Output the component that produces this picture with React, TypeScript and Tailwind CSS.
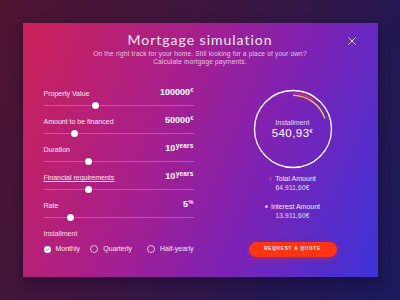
import React from 'react';

type Row = {
  label: string;
  value: string;
  unit: string;
  pos: number; // thumb centre, px from track start
  underline?: boolean;
};

const rows: Row[] = [
  { label: 'Property Value', value: '100000', unit: '€', pos: 52 },
  { label: 'Amount to be financed', value: '50000', unit: '€', pos: 31 },
  { label: 'Duration', value: '10', unit: 'years', pos: 45 },
  { label: 'Financial requirements', value: '10', unit: 'years', pos: 45, underline: true },
  { label: 'Rate', value: '5', unit: '%', pos: 27 },
];

const SliderRow: React.FC<{ row: Row }> = ({ row }) => (
  <div className="flex flex-col">
    <div className="flex items-end justify-between h-[10px]">
      <span
        className={`text-[7px] leading-[10px] text-white/90 ${row.underline ? 'underline underline-offset-1' : ''}`}
      >
        {row.label}
      </span>
      <span className="text-[9px] leading-[10px] font-bold text-white whitespace-nowrap relative -top-[1px]">
        {row.value}
        <span
          className={`font-bold relative ml-[0.5px] ${row.unit === 'years' ? 'text-[6.5px] -top-[3px] tracking-[0.02em]' : 'text-[5.5px] -top-[3px]'}`}
        >
          {row.unit}
        </span>
      </span>
    </div>
    <div className="relative h-[12px] flex items-center">
      <div className="h-px w-full bg-white/25" />
      <div
        className="absolute top-1/2 w-[7px] h-[7px] -mt-[3.5px] -ml-[3.5px] rounded-full bg-white shadow-[0_0_2px_rgba(0,0,0,0.25)]"
        style={{ left: row.pos }}
      />
    </div>
  </div>
);

const Radio: React.FC<{ label: string; checked?: boolean; width: string }> = ({ label, checked, width }) => (
  <div className={`flex items-center gap-[5px] whitespace-nowrap ${width}`}>
    {checked ? (
      <span className="w-[7px] h-[7px] rounded-full bg-white flex items-center justify-center">
        <svg width="5" height="5" viewBox="0 0 10 10">
          <path d="M2 5.2 L4.2 7.3 L8 2.8" fill="none" stroke="#3fb950" strokeWidth="1.6" strokeLinecap="round" strokeLinejoin="round" />
        </svg>
      </span>
    ) : (
      <span className="w-[8px] h-[8px] rounded-full border border-white/70" />
    )}
    <span className="text-[7px] leading-[10px] font-medium text-white/90">{label}</span>
  </div>
);

const Gauge: React.FC = () => {
  const c = 40;
  const arc = (r: number, deg: number) => {
    const a = (deg * Math.PI) / 180;
    const x = c + r * Math.sin(a);
    const y = c - r * Math.cos(a);
    return `M ${c} ${c - r} A ${r} ${r} 0 0 1 ${x.toFixed(2)} ${y.toFixed(2)}`;
  };
  return (
    <div className="relative w-[80px] h-[80px]">
      <svg width="80" height="80" viewBox="0 0 80 80" className="absolute inset-0">
        <circle cx={c} cy={c} r="38.5" fill="none" stroke="#ffffff" strokeWidth="1.3" />
        <path d={arc(35.6, 34)} fill="none" stroke="#e8344a" strokeWidth="1.4" />
        <path d={arc(33.6, 72)} fill="none" stroke="#f6c25a" strokeWidth="1.4" />
      </svg>
      <div className="absolute inset-0 flex flex-col items-center justify-center pt-[2px]">
        <span className="text-[7px] leading-[9px] text-white/80">Installment</span>
        <span className="text-[11.5px] leading-[13px] font-medium tracking-[0.04em] text-white whitespace-nowrap">
          540,93<span className="text-[6px] relative -top-[4px]">€</span>
        </span>
      </div>
    </div>
  );
};

export default function App() {
  return (
    <div
      className="w-[400px] h-[300px] flex items-center justify-center bg-[linear-gradient(115deg,#4e1430_0%,#3a1540_45%,#241750_75%,#1b1a5c_100%)]"
      style={{ fontFamily: '"Liberation Sans", Arial, sans-serif' }}
    >
      <div className="relative w-[355px] h-[254px] bg-[linear-gradient(112deg,#cc2157_0%,#a81f8c_38%,#7e22b4_65%,#3c33d8_100%)] shadow-[0_4px_10px_rgba(10,5,40,0.45)] flex flex-col">
        {/* Close */}
        <button className="absolute right-[22px] top-[14px] w-[8px] h-[8px]">
          <svg width="8" height="8" viewBox="0 0 8 8">
            <path d="M0.5 0.5 L7.5 7.5 M7.5 0.5 L0.5 7.5" stroke="#f3dcf5" strokeWidth="1" />
          </svg>
        </button>

        {/* Header */}
        <div className="pt-[9px] flex flex-col items-center">
          <h1
            className="text-[14px] leading-[16px] font-normal tracking-[0.07em] text-white/90"
            style={{ fontFamily: 'Lato, "Liberation Sans", sans-serif' }}
          >
            Mortgage simulation
          </h1>
          <p className="mt-[2px] text-[6.5px] leading-[8px] tracking-[0.03em] text-white/75 text-center">
            On the right track for your home. Still looking for a place of your own?
            <br />
            Calculate mortgage payments.
          </p>
        </div>

        {/* Body */}
        <div className="flex pl-[21px] pr-[15px] mt-[23px]">
          {/* Left: sliders */}
          <div className="w-[150px] flex flex-col gap-[6px]">
            {rows.map((r) => (
              <SliderRow key={r.label} row={r} />
            ))}
            <div className="flex flex-col">
              <span className="text-[7px] leading-[10px] text-white/85">Installment</span>
              <div className="flex items-center mt-[5px] h-[10px]">
                <Radio label="Monthly" checked width="w-[47px]" />
                <Radio label="Quarterly" width="w-[57px]" />
                <Radio label="Half-yearly" width="w-auto" />
              </div>
            </div>
          </div>

          {/* Right: result */}
          <div className="ml-[29px] flex-1 flex flex-col items-center">
            <Gauge />
            <div className="mt-[5px] flex flex-col items-center">
              <span className="flex items-center gap-[3px] text-[7px] leading-[9px] font-medium text-white/90">
                <span className="w-[3px] h-[3px] rounded-full bg-[#e8344a]" />
                Total Amount
              </span>
              <span className="text-[6.5px] leading-[9px] text-white/85 tracking-[0.03em]">64.911,60€</span>
            </div>
            <div className="mt-[10px] flex flex-col items-center">
              <span className="flex items-center gap-[3px] text-[7px] leading-[9px] font-medium text-white/90">
                <span className="w-[3px] h-[3px] rounded-full bg-[#f6c25a]" />
                Interest Amount
              </span>
              <span className="text-[6.5px] leading-[9px] text-white/85 tracking-[0.03em]">13.911,60€</span>
            </div>
            <button className="mt-[22px] w-[88px] h-[15px] rounded-full bg-[#ff3412] shadow-[0_2px_6px_rgba(255,50,20,0.35)] flex items-center justify-center">
              <span className="text-[4.5px] font-bold tracking-[0.2em] text-white">REQUEST A QUOTE</span>
            </button>
          </div>
        </div>
      </div>
    </div>
  );
}
